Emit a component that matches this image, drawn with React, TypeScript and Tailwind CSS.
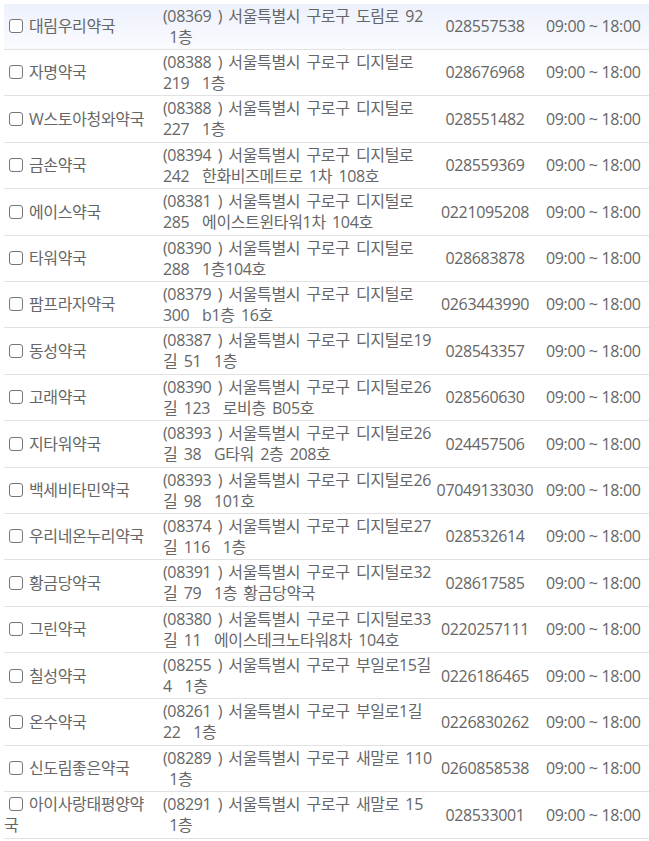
type Pharmacy = {
  name: string;
  addr1: string;
  addr2: string;
  phone: string;
};

const rows: Pharmacy[] = [
  { name: "대림우리약국", addr1: "(08369 ) 서울특별시 구로구 도림로 92", addr2: " 1층", phone: "028557538" },
  { name: "자명약국", addr1: "(08388 ) 서울특별시 구로구 디지털로", addr2: "219  1층", phone: "028676968" },
  { name: "W스토아청와약국", addr1: "(08388 ) 서울특별시 구로구 디지털로", addr2: "227  1층", phone: "028551482" },
  { name: "금손약국", addr1: "(08394 ) 서울특별시 구로구 디지털로", addr2: "242  한화비즈메트로 1차 108호", phone: "028559369" },
  { name: "에이스약국", addr1: "(08381 ) 서울특별시 구로구 디지털로", addr2: "285  에이스트윈타워1차 104호", phone: "0221095208" },
  { name: "타워약국", addr1: "(08390 ) 서울특별시 구로구 디지털로", addr2: "288  1층104호", phone: "028683878" },
  { name: "팜프라자약국", addr1: "(08379 ) 서울특별시 구로구 디지털로", addr2: "300  b1층 16호", phone: "0263443990" },
  { name: "동성약국", addr1: "(08387 ) 서울특별시 구로구 디지털로19", addr2: "길 51  1층", phone: "028543357" },
  { name: "고래약국", addr1: "(08390 ) 서울특별시 구로구 디지털로26", addr2: "길 123  로비층 B05호", phone: "028560630" },
  { name: "지타워약국", addr1: "(08393 ) 서울특별시 구로구 디지털로26", addr2: "길 38  G타워 2층 208호", phone: "024457506" },
  { name: "백세비타민약국", addr1: "(08393 ) 서울특별시 구로구 디지털로26", addr2: "길 98  101호", phone: "07049133030" },
  { name: "우리네온누리약국", addr1: "(08374 ) 서울특별시 구로구 디지털로27", addr2: "길 116  1층", phone: "028532614" },
  { name: "황금당약국", addr1: "(08391 ) 서울특별시 구로구 디지털로32", addr2: "길 79  1층 황금당약국", phone: "028617585" },
  { name: "그린약국", addr1: "(08380 ) 서울특별시 구로구 디지털로33", addr2: "길 11  에이스테크노타워8차 104호", phone: "0220257111" },
  { name: "칠성약국", addr1: "(08255 ) 서울특별시 구로구 부일로15길", addr2: "4  1층", phone: "0226186465" },
  { name: "온수약국", addr1: "(08261 ) 서울특별시 구로구 부일로1길", addr2: "22  1층", phone: "0226830262" },
  { name: "신도림좋은약국", addr1: "(08289 ) 서울특별시 구로구 새말로 110", addr2: " 1층", phone: "0260858538" },
  { name: "아이사랑태평양약국", addr1: "(08291 ) 서울특별시 구로구 새말로 15", addr2: " 1층", phone: "028533001" },
];

export default function App() {
  return (
    <div className="min-h-screen bg-white pl-[4px] pt-[3.6px] text-[16px] leading-[21px] tracking-[-0.35px] text-[#666] font-['Open_Sans','Noto_Sans_CJK_KR',sans-serif]">
      {rows.map((r, i) => (
        <div
          key={r.name}
          className={
            "grid grid-cols-[158px_272px_102px_1fr] border-b border-[#e2e2e2] pt-[2px] pb-[1.4px] " +
            (i === 0 ? "bg-gradient-to-b from-[#edf1fb] to-[#fafbff]" : "")
          }
        >
          {/* name + checkbox */}
          <div className="flex items-center pr-[6px]">
            <div>
              <span className="ml-[5px] mr-[6px] inline-block h-[14px] w-[14px] rounded-[3px] border-[1.5px] border-[#767676] bg-white align-[-1px]" />
              {r.name}
            </div>
          </div>
          {/* address */}
          <div className="pl-[1px] whitespace-pre [word-spacing:2.5px]">
            <div>{r.addr1}</div>
            <div>{r.addr2}</div>
          </div>
          <div className="flex items-center justify-center">{r.phone}</div>
          <div className="flex items-center pl-[10px]">09:00 ~ 18:00</div>
        </div>
      ))}
    </div>
  );
}
